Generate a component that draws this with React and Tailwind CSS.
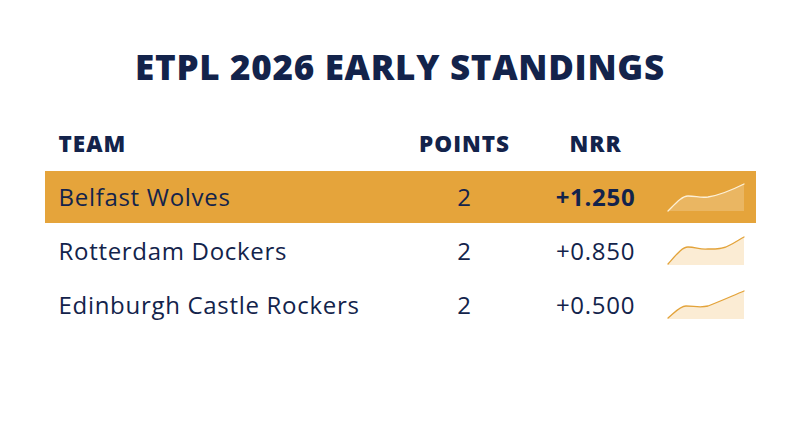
import React from "react";

const rows = [
  {
    team: "Belfast Wolves",
    pts: "2",
    nrr: "+1.250",
    hi: true,
    d: "M2 28 C 10 20, 16 13, 22 13 C 30 13, 34 15, 42 14 C 55 12, 68 6, 78 1",
  },
  {
    team: "Rotterdam Dockers",
    pts: "2",
    nrr: "+0.850",
    d: "M2 27 C 10 18, 16 10, 22 10 C 30 10, 34 13, 42 12 C 50 12, 58 12, 64 8 C 70 5, 74 2, 78 0",
  },
  {
    team: "Edinburgh Castle Rockers",
    pts: "2",
    nrr: "+0.500",
    d: "M2 27 C 8 22, 14 15, 20 15 C 28 15, 34 17, 42 15 C 55 10, 66 5, 78 0",
  },
];

function Spark({ d, hi }) {
  return (
    <svg width="78" height="28" viewBox="0 0 78 28" className="block overflow-visible">
      <path d={`${d} L78 28 L2 28 Z`} fill={hi ? "rgba(255,255,255,0.2)" : "#fbecd4"} />
      <path d={d} fill="none" stroke={hi ? "#fdf0d6" : "#e3a33a"} strokeWidth="1.3" strokeLinecap="round" />
    </svg>
  );
}

export default function App() {
  return (
    <div className="w-[800px] h-[447px] bg-white flex flex-col items-center font-['Open_Sans',sans-serif] text-[#13234b]">
      <h1 className="mt-[45px] text-[35px] leading-[44px] font-extrabold tracking-[0.7px]">
        ETPL 2026 EARLY STANDINGS
      </h1>
      <div className="w-[711px] mt-[30px] flex flex-col gap-[2px]">
        <div className="grid grid-cols-[370px_100px_141px_100px] h-[50px] items-center text-[22.5px] font-extrabold tracking-[1px]">
          <div className="pl-[14px]">TEAM</div>
          <div className="text-center">POINTS</div>
          <div className="text-center pl-[21px]">NRR</div>
          <div></div>
        </div>
        {rows.map((r) => (
          <div
            key={r.team}
            className={`grid grid-cols-[370px_100px_141px_100px] h-[52px] items-center text-[24px] tracking-[0.7px] ${r.hi ? "bg-[#e5a43b]" : "bg-white"}`}
          >
            <div className="pl-[14px]">{r.team}</div>
            <div className="text-center">{r.pts}</div>
            <div className={`text-center pl-[21px] ${r.hi ? "font-bold" : ""}`}>{r.nrr}</div>
            <div className="pl-[10px] flex items-center">
              <Spark d={r.d} hi={r.hi} />
            </div>
          </div>
        ))}
      </div>
    </div>
  );
}
